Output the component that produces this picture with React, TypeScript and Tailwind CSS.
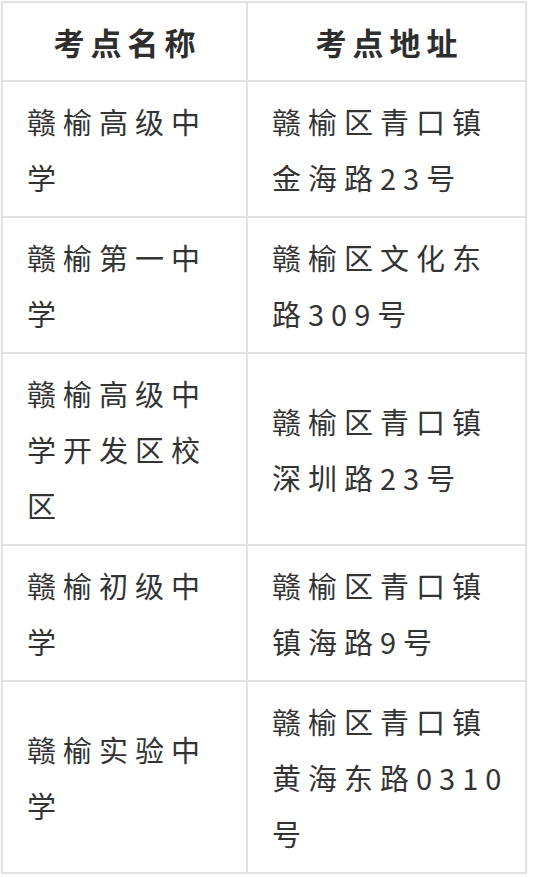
import React from "react";

const rows: { name: string[]; addr: string[] }[] = [
  { name: ["赣榆高级中", "学"], addr: ["赣榆区青口镇", "金海路23号"] },
  { name: ["赣榆第一中", "学"], addr: ["赣榆区文化东", "路309号"] },
  { name: ["赣榆高级中", "学开发区校", "区"], addr: ["赣榆区青口镇", "深圳路23号"] },
  { name: ["赣榆初级中", "学"], addr: ["赣榆区青口镇", "镇海路9号"] },
  { name: ["赣榆实验中", "学"], addr: ["赣榆区青口镇", "黄海东路0310", "号"] },
];

function Lines({ lines }: { lines: string[] }) {
  return (
    <div>
      {lines.map((l, i) => (
        <div key={i} className="whitespace-nowrap">
          {l}
        </div>
      ))}
    </div>
  );
}

export default function App() {
  return (
    <div
      className="bg-white w-[533px] h-[877px] pl-px pt-px text-[#333333]"
      style={{ fontFamily: '"Noto Sans CJK SC", "Noto Sans", sans-serif' }}
    >
      <table className="border-collapse w-[526px] table-fixed">
        <colgroup>
          <col className="w-[245px]" />
          <col />
        </colgroup>
        <thead>
          <tr>
            <th className="border-2 border-[#e2e2e2] h-[79px] text-center align-middle text-[31px] font-bold tracking-[6px] leading-[56px] pl-[6px] text-[#2e2e2e]">
              考点名称
            </th>
            <th className="border-2 border-[#e2e2e2] h-[79px] text-center align-middle text-[31px] font-bold tracking-[6px] leading-[56px] pl-[6px] text-[#2e2e2e]">
              考点地址
            </th>
          </tr>
        </thead>
        <tbody>
          {rows.map((r, i) => (
            <tr key={i}>
              <td className="border-2 border-[#e2e2e2] align-middle pl-[24px] pr-0 py-[11px] text-[29px] tracking-[7px] leading-[56px] text-[#333333]">
                <Lines lines={r.name} />
              </td>
              <td className="border-2 border-[#e2e2e2] align-middle pl-[24px] pr-0 py-[11px] text-[29px] tracking-[7px] leading-[56px] text-[#333333]">
                <Lines lines={r.addr} />
              </td>
            </tr>
          ))}
        </tbody>
      </table>
    </div>
  );
}
